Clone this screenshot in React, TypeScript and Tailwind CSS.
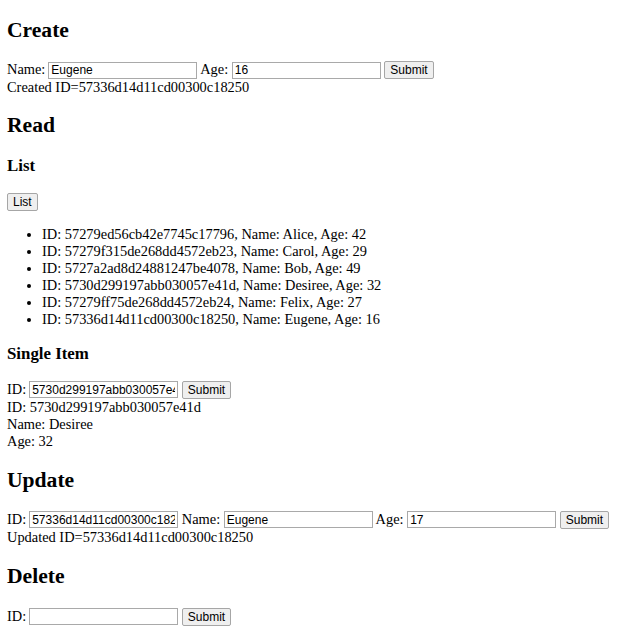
const field =
  "inline-block h-[17px] w-[149px] border border-[#a9a9a9] bg-white px-[2px] align-baseline font-['Liberation_Sans',Arial,sans-serif] text-[12px] text-black outline-none";
const btn =
  "inline-block h-[18px] rounded-[2px] border border-[#a6a6a6] bg-[#efefef] px-[5px] align-baseline font-['Liberation_Sans',Arial,sans-serif] text-[12px] leading-[14px] text-black";

const people = [
  { id: "57279ed56cb42e7745c17796", name: "Alice", age: 42 },
  { id: "57279f315de268dd4572eb23", name: "Carol", age: 29 },
  { id: "5727a2ad8d24881247be4078", name: "Bob", age: 49 },
  { id: "5730d299197abb030057e41d", name: "Desiree", age: 32 },
  { id: "57279ff75de268dd4572eb24", name: "Felix", age: 27 },
  { id: "57336d14d11cd00300c18250", name: "Eugene", age: 16 },
];

function H2({ children, className = "" }: { children: React.ReactNode; className?: string }) {
  return <h2 className={`text-[21.6px] font-bold leading-[normal] ${className}`}>{children}</h2>;
}

function H3({ children, className = "" }: { children: React.ReactNode; className?: string }) {
  return <h3 className={`text-[16.85px] font-bold leading-[normal] ${className}`}>{children}</h3>;
}

export default function App() {
  return (
    <div className="min-h-[641px] bg-white px-[7px] pb-[8px] pt-px font-['Liberation_Serif','Times_New_Roman',serif] text-[14.4px] leading-[normal] text-black">
      <div className="-mt-px">
        <H2 className="mt-[18px] mb-[18px]">Create</H2>
        <form onSubmit={(e) => e.preventDefault()}>
          Name:<input className={`${field} ml-[3px]`} defaultValue="Eugene" />{" "}
          Age: <input className={field} defaultValue="16" />{" "}
          <button className={btn}>Submit</button>
        </form>
        <div>Created ID=57336d14d11cd00300c18250</div>

        <H2 className="mt-[17px] mb-[18px]">Read</H2>
        <H3 className="my-[16.85px]">List</H3>
        <div>
          <button className={btn}>List</button>
        </div>
        <ul className="mt-[15.4px] mb-0 list-disc pl-[35px]">
          {people.map((p) => (
            <li key={p.id}>{`ID: ${p.id}, Name: ${p.name}, Age: ${p.age}`}</li>
          ))}
        </ul>

        <H3 className="mt-[15.85px] mb-[16.85px]">Single Item</H3>
        <form onSubmit={(e) => e.preventDefault()}>
          ID:<input className={`${field} ml-[3px]`} defaultValue="5730d299197abb030057e41d" />{" "}
          <button className={btn}>Submit</button>
        </form>
        <div>ID: 5730d299197abb030057e41d</div>
        <div>Name: Desiree</div>
        <div>Age: 32</div>

        <H2 className="mt-[18px] mb-[18px]">Update</H2>
        <form onSubmit={(e) => e.preventDefault()}>
          ID:<input className={`${field} ml-[3px]`} defaultValue="57336d14d11cd00300c18250" />{" "}
          Name: <input className={field} defaultValue="Eugene" />{" "}
          Age: <input className={field} defaultValue="17" />{" "}
          <button className={btn}>Submit</button>
        </form>
        <div>Updated ID=57336d14d11cd00300c18250</div>

        <H2 className="mt-[18px] mb-[19px]">Delete</H2>
        <form onSubmit={(e) => e.preventDefault()}>
          ID:<input className={`${field} ml-[3px]`} />{" "}
          <button className={btn}>Submit</button>
        </form>
      </div>
    </div>
  );
}
